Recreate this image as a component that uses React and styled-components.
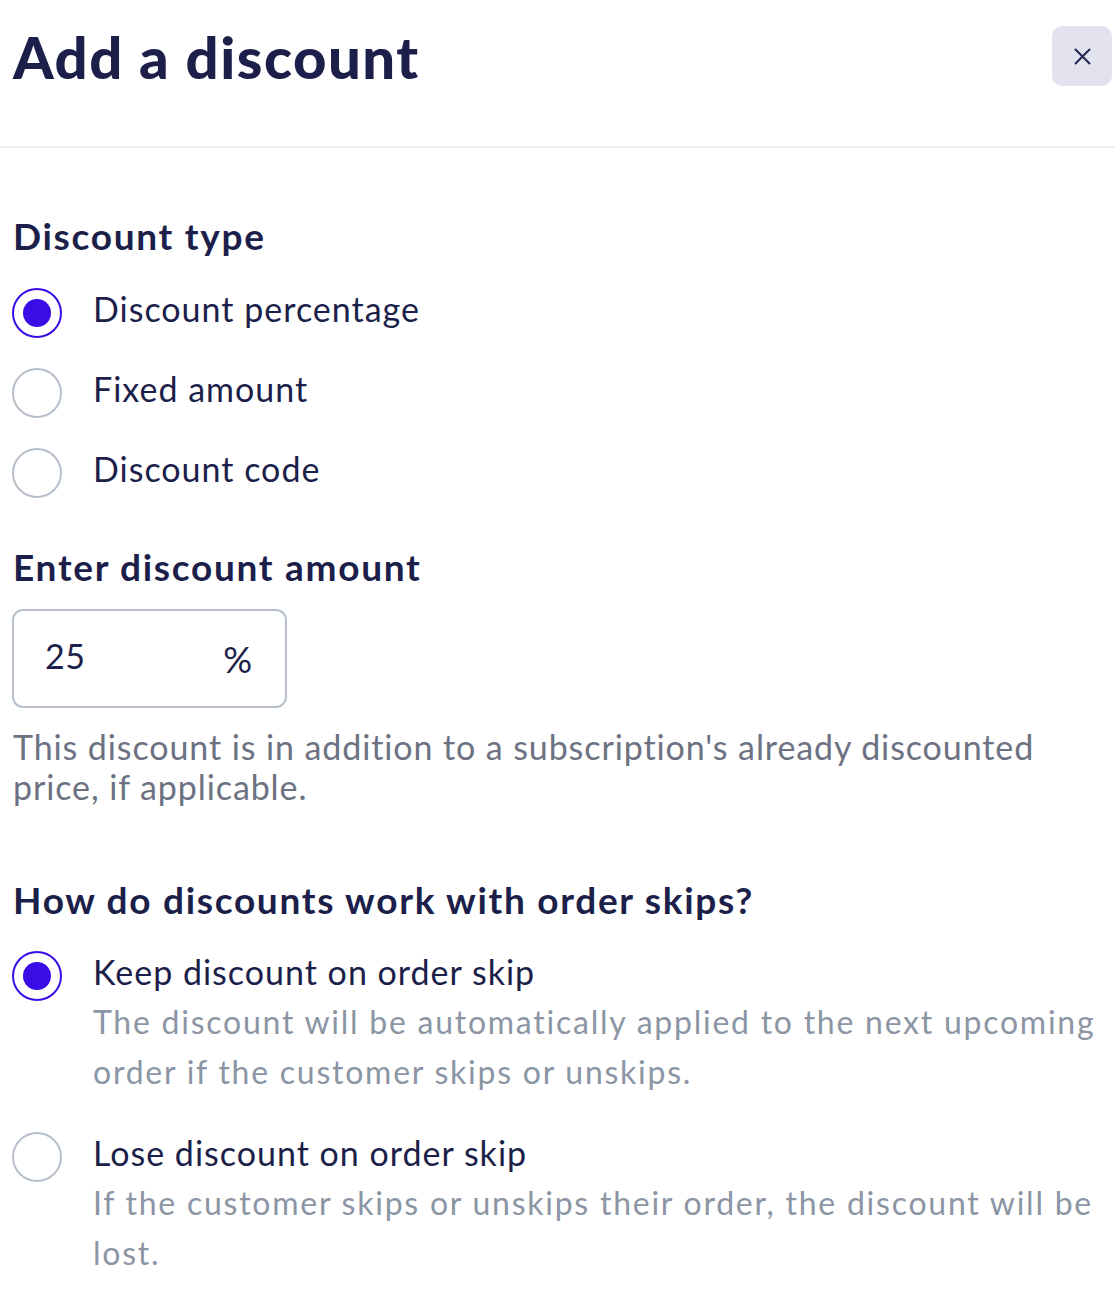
import React, { useState } from "react";
import styled, { createGlobalStyle } from "styled-components";

const GlobalStyle = createGlobalStyle`
  html, body {
    margin: 0;
    padding: 0;
    background: #ffffff;
  }
  body {
    font-family: Lato, "Open Sans", "Liberation Sans", sans-serif;
    color: #1c1f4a;
    -webkit-font-smoothing: antialiased;
  }
  * { box-sizing: border-box; }
`;

const Modal = styled.div`
  width: 1114px;
  background: #ffffff;
`;

const Header = styled.header`
  display: flex;
  justify-content: space-between;
  align-items: flex-start;
  height: 148px;
  padding: 26px 2px 0 13px;
  border-bottom: 2px solid #ececec;
`;

const Title = styled.h1`
  margin: 2px 0 0;
  font-size: 58px;
  line-height: 1;
  font-weight: 900;
  color: #1c1f4a;
  letter-spacing: 1.5px;
`;

const CloseButton = styled.button`
  width: 60px;
  height: 60px;
  border: none;
  border-radius: 10px;
  background: #e3e3ef;
  display: flex;
  align-items: center;
  justify-content: center;
  padding: 0;
  cursor: pointer;
`;

const Body = styled.div`
  padding: 0 0 40px 12px;
`;

const SectionTitle = styled.h2`
  margin: ${(p) => p.$top}px 0 0 1px;
  font-size: 37px;
  line-height: 1;
  font-weight: 700;
  letter-spacing: 1.7px;
  color: #1c1f4a;
`;

const RadioList = styled.div`
  display: flex;
  flex-direction: column;
  gap: ${(p) => p.$gap}px;
  margin-top: ${(p) => p.$top}px;
`;

const RadioRow = styled.label`
  display: flex;
  align-items: flex-start;
  gap: 31px;
  cursor: pointer;
`;

const RadioCircle = styled.span`
  flex: none;
  width: 50px;
  height: 50px;
  border-radius: 50%;
  border: 2px solid ${(p) => (p.$checked ? "#3a0ce6" : "#b7c0ca")};
  display: flex;
  align-items: center;
  justify-content: center;

  &::after {
    content: "";
    width: 28px;
    height: 28px;
    border-radius: 50%;
    background: #3a0ce6;
    display: ${(p) => (p.$checked ? "block" : "none")};
  }
`;

const RadioText = styled.div`
  display: flex;
  flex-direction: column;
  padding-top: 4px;
  min-width: 0;
`;

const RadioLabel = styled.span`
  font-size: 34px;
  line-height: 1;
  letter-spacing: 1px;
  color: #1c1f4a;
`;

const RadioHint = styled.span`
  margin-top: 8px;
  font-size: 32px;
  line-height: 50px;
  letter-spacing: 1.75px;
  color: #8b95a4;
`;

const AmountField = styled.div`
  margin-top: 24px;
  width: 275px;
  height: 99px;
  border: 2px solid #b7c0ca;
  border-radius: 11px;
  display: flex;
  align-items: center;
  justify-content: space-between;
  padding: 0 33px 0 31px;
`;

const AmountValue = styled.span`
  font-size: 34px;
  line-height: 1;
  margin-top: -6px;
  letter-spacing: 0.5px;
  color: #1c1f4a;
`;

const AmountUnit = styled.span`
  font-size: 36px;
  line-height: 1;
  font-weight: 400;
  color: #1c1f4a;
`;

const HelpText = styled.p`
  margin: 19px 0 0 1px;
  max-width: 1045px;
  font-size: 34px;
  line-height: 40px;
  letter-spacing: 0.9px;
  color: #6c7282;
`;

const CloseIcon = () => (
  <svg width="17" height="17" viewBox="0 0 17 17" fill="none">
    <path d="M1.5 1.5l14 14M15.5 1.5l-14 14" stroke="#23264f" strokeWidth="2" strokeLinecap="round" />
  </svg>
);

const typeOptions = ["Discount percentage", "Fixed amount", "Discount code"];

const skipOptions = [
  {
    label: "Keep discount on order skip",
    hint: "The discount will be automatically applied to the next upcoming order if the customer skips or unskips.",
  },
  {
    label: "Lose discount on order skip",
    hint: "If the customer skips or unskips their order, the discount will be lost.",
  },
];

export default function App() {
  const [type, setType] = useState(0);
  const [skip, setSkip] = useState(0);

  return (
    <Modal>
      <GlobalStyle />
      <Header>
        <Title>Add a discount</Title>
        <CloseButton aria-label="Close">
          <CloseIcon />
        </CloseButton>
      </Header>
      <Body>
        <SectionTitle $top={69}>Discount type</SectionTitle>
        <RadioList $gap={30} $top={34}>
          {typeOptions.map((opt, i) => (
            <RadioRow key={opt} onClick={() => setType(i)}>
              <RadioCircle $checked={type === i} />
              <RadioText>
                <RadioLabel>{opt}</RadioLabel>
              </RadioText>
            </RadioRow>
          ))}
        </RadioList>

        <SectionTitle $top={50}>Enter discount amount</SectionTitle>
        <AmountField>
          <AmountValue>25</AmountValue>
          <AmountUnit>%</AmountUnit>
        </AmountField>
        <HelpText>
          This discount is in addition to a subscription's already discounted price, if applicable.
        </HelpText>

        <SectionTitle $top={74}>How do discounts work with order skips?</SectionTitle>
        <RadioList $gap={35} $top={33}>
          {skipOptions.map((opt, i) => (
            <RadioRow key={opt.label} onClick={() => setSkip(i)}>
              <RadioCircle $checked={skip === i} />
              <RadioText>
                <RadioLabel>{opt.label}</RadioLabel>
                <RadioHint>{opt.hint}</RadioHint>
              </RadioText>
            </RadioRow>
          ))}
        </RadioList>
      </Body>
    </Modal>
  );
}
